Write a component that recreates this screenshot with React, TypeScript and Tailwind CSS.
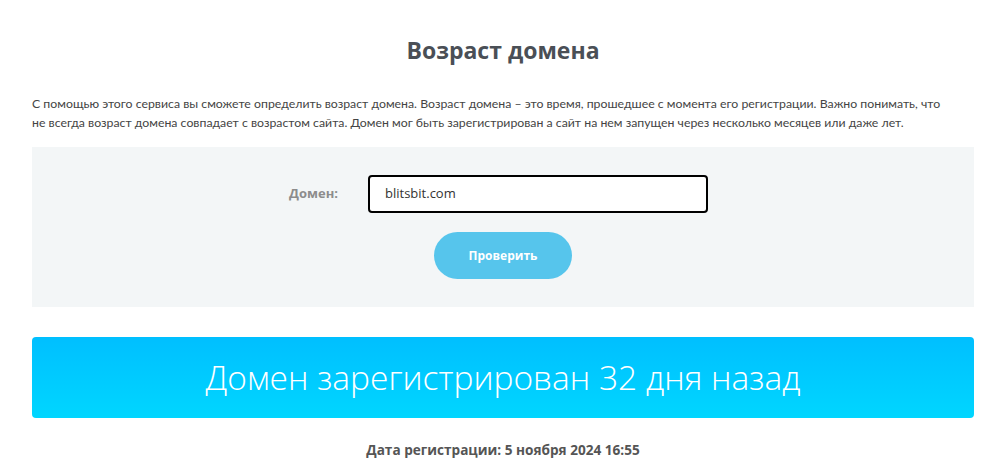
import React from "react";

export default function App() {
  return (
    <div className="w-[1006px] h-[469px] bg-white overflow-hidden font-['Open_Sans',sans-serif]">
      <div className="mx-[32px]">
        <h1 className="text-center text-[23px] font-bold text-[#4a4f56] pt-[36px] leading-[28px]">
          Возраст домена
        </h1>
        <p className="mt-[30px] text-[12.3px] leading-[19px] text-[#444] font-['Lato',sans-serif]">
          С помощью этого сервиса вы сможете определить возраст домена. Возраст домена – это время, прошедшее с момента его регистрации. Важно понимать, что
          <br />
          не всегда возраст домена совпадает с возрастом сайта. Домен мог быть зарегистрирован а сайт на нем запущен через несколько месяцев или даже лет.
        </p>
        <div className="mt-[15px] h-[160px] bg-[#f3f6f7] flex flex-col items-center pt-[28px]">
          <div className="flex items-center mr-[9px]">
            <label className="w-[79px] text-[13px] font-bold text-[#8c8c8c]">Домен:</label>
            <div className="w-[340px] h-[38px] border-2 border-black rounded-[4px] bg-white flex items-center px-[15px] text-[13px] text-[#333]">
              blitsbit.com
            </div>
          </div>
          <button className="mt-[19px] w-[138px] h-[47px] rounded-full bg-[#56c5ec] text-white text-[12px] font-bold">
            Проверить
          </button>
        </div>
        <div className="mt-[30px] h-[81px] rounded-[4px] flex items-center justify-center text-white text-[33.5px] font-light bg-gradient-to-b from-[#00bfff] to-[#00d6ff]">
          Домен зарегистрирован 32 дня назад
        </div>
        <div className="mt-[22px] text-center text-[13.6px] font-bold text-[#555]">
          Дата регистрации: 5 ноября 2024 16:55
        </div>
      </div>
    </div>
  );
}
